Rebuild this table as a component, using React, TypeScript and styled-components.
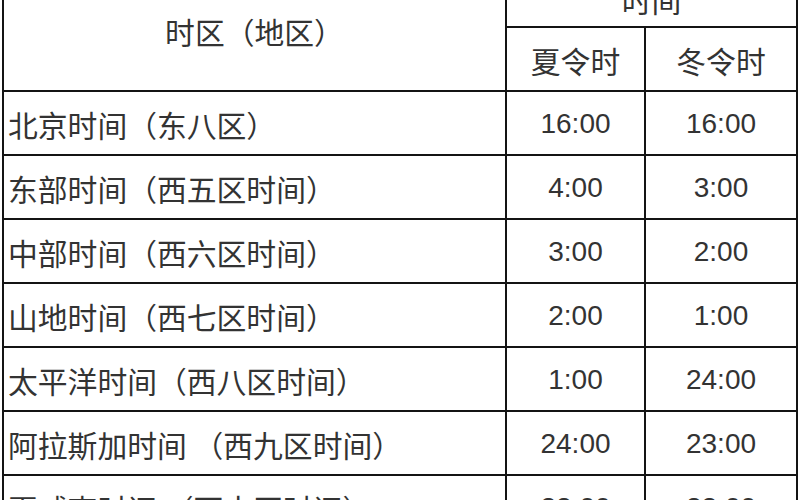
import React from 'react';
import styled, { createGlobalStyle } from 'styled-components';

const GlobalStyle = createGlobalStyle`
  html, body {
    margin: 0;
    padding: 0;
    background: #ffffff;
    overflow: hidden;
  }
`;

const Page = styled.div`
  width: 800px;
  height: 500px;
  overflow: hidden;
  padding-left: 2px;
  box-sizing: border-box;
`;

const Grid = styled.div`
  display: grid;
  grid-template-columns: 503px 139px 152px;
  grid-template-rows: 58px 64px;
  grid-auto-rows: 64px;
  margin-top: -32px;
  border-left: 2px solid #141414;
  border-top: 2px solid #141414;
  font-family: 'Liberation Sans', 'Noto Sans CJK SC', sans-serif;
  font-size: 29.8px;
  color: #333333;
`;

const Cell = styled.div<{ $align?: 'left' | 'center'; $rowSpan?: number; $colSpan?: number }>`
  display: flex;
  align-items: center;
  justify-content: ${(p) => (p.$align === 'left' ? 'flex-start' : 'center')};
  padding-left: ${(p) => (p.$align === 'left' ? '4px' : '0')};
  border-right: 2px solid #141414;
  border-bottom: 2px solid #141414;
  box-sizing: border-box;
  white-space: pre;
  grid-row: ${(p) => (p.$rowSpan ? `span ${p.$rowSpan}` : 'auto')};
  grid-column: ${(p) => (p.$colSpan ? `span ${p.$colSpan}` : 'auto')};
`;

const HeadText = styled.span`
  font-family: 'Noto Sans CJK SC', sans-serif;
  font-weight: 400;
  margin-top: 2px;
`;

const Time = styled.span`
  font-family: 'Liberation Sans', sans-serif;
  font-size: 28px;
  margin-top: 2px;
`;

const rows = [
  { zone: '北京时间（东八区）', summer: '16:00', winter: '16:00' },
  { zone: '东部时间（西五区时间）', summer: '4:00', winter: '3:00' },
  { zone: '中部时间（西六区时间）', summer: '3:00', winter: '2:00' },
  { zone: '山地时间（西七区时间）', summer: '2:00', winter: '1:00' },
  { zone: '太平洋时间（西八区时间）', summer: '1:00', winter: '24:00' },
  { zone: '阿拉斯加时间 （西九区时间）', summer: '24:00', winter: '23:00' },
  { zone: '夏威夷时间 （西十区时间）', summer: '22:00', winter: '22:00' },
];

const App: React.FC = () => {
  return (
    <Page>
      <GlobalStyle />
      <Grid>
        <Cell $rowSpan={2}>
          <HeadText>时区（地区）</HeadText>
        </Cell>
        <Cell $colSpan={2}>
          <HeadText>时间</HeadText>
        </Cell>
        <Cell>
          <HeadText>夏令时</HeadText>
        </Cell>
        <Cell>
          <HeadText>冬令时</HeadText>
        </Cell>
        {rows.map((r) => (
          <React.Fragment key={r.zone}>
            <Cell $align="left">
              <HeadText>{r.zone}</HeadText>
            </Cell>
            <Cell>
              <Time>{r.summer}</Time>
            </Cell>
            <Cell>
              <Time>{r.winter}</Time>
            </Cell>
          </React.Fragment>
        ))}
      </Grid>
    </Page>
  );
};

export default App;
